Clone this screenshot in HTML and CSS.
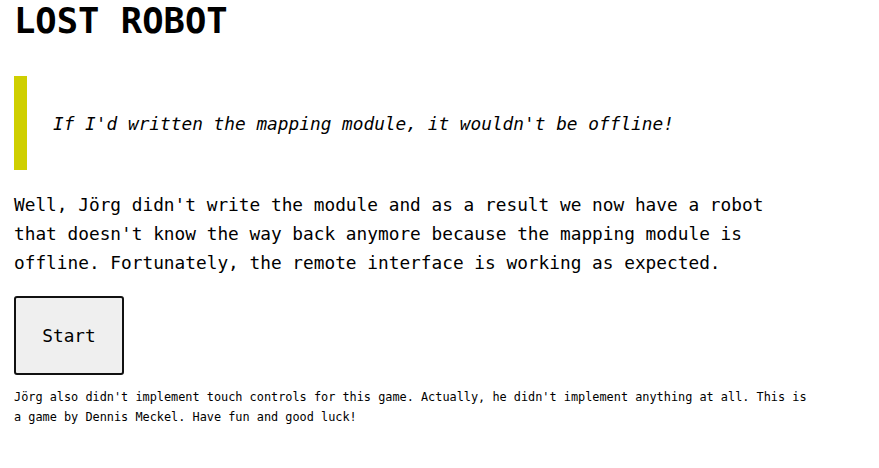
FILE: index.html
```html
<!DOCTYPE html>
<html lang="en">
<head>
<meta charset="utf-8">
<title>Lost Robot</title>
<link rel="stylesheet" href="styles.css">
</head>
<body>
<main class="page">
  <h1 class="title">LOST ROBOT</h1>
  <blockquote class="quote">If I'd written the mapping module, it wouldn't be offline!</blockquote>
  <p class="intro">Well, Jörg didn't write the module and as a result we now have a robot that doesn't know the way back anymore because the mapping module is offline. Fortunately, the remote interface is working as expected.</p>
  <button class="start" type="button">Start</button>
  <p class="note">Jörg also didn't implement touch controls for this game. Actually, he didn't implement anything at all. This is a game by Dennis Meckel. Have fun and good luck!</p>
</main>
</body>
</html>
```
FILE: styles.css
```css
html, body {
  margin: 0;
  padding: 0;
  background: #ffffff;
  color: #000000;
}
.page {
  padding: 0 14px;
  font-family: "DejaVu Sans Mono", "Liberation Mono", monospace;
}
.title {
  margin: 0;
  padding-top: 1px;
  font-size: 35.5px;
  line-height: 40px;
  font-weight: bold;
}
.quote {
  margin: 35px 0 0 0;
  border-left: 13px solid #cfcf00;
  padding: 33px 0 32px 26px;
  font-style: italic;
  font-size: 17.8px;
  line-height: 29px;
}
.intro {
  margin: 20px 0 0 0;
  max-width: 775px;
  font-size: 17.8px;
  line-height: 29px;
}
.start {
  display: block;
  margin-top: 19px;
  width: 110px;
  height: 79px;
  border: 2px solid #111111;
  border-radius: 3px;
  background: #efefef;
  color: #000;
  font-family: "DejaVu Sans Mono", "Liberation Mono", monospace;
  font-size: 17.8px;
  padding: 0;
}
.note {
  margin: 12px 0 0 0;
  max-width: 800px;
  font-size: 11.87px;
  line-height: 20px;
}
```
